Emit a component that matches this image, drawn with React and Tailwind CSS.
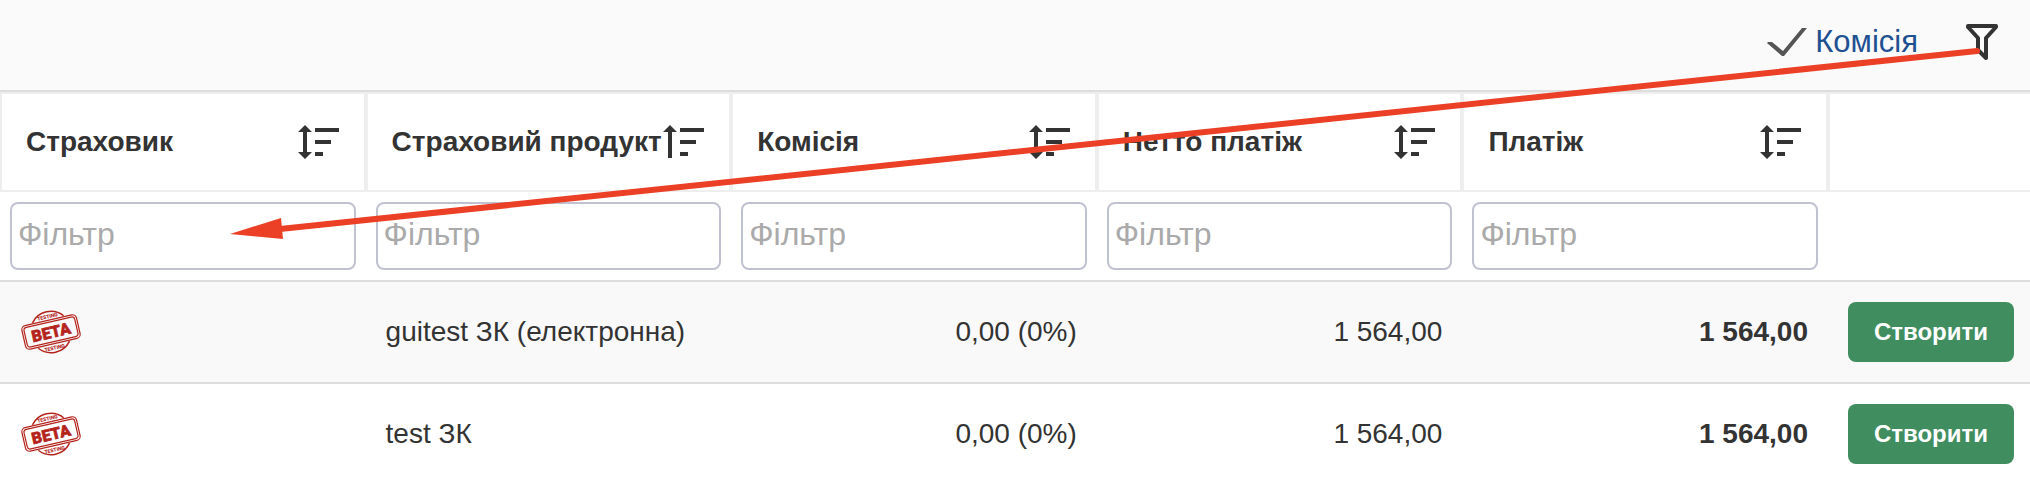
import React, { useState } from 'react';

const COLUMNS = [
  { key: "insurer", label: "Страховик", sort: "none" },
  { key: "product", label: "Страховий продукт", sort: "asc" },
  { key: "commission", label: "Комісія", sort: "none" },
  { key: "net", label: "Нетто платіж", sort: "none" },
  { key: "payment", label: "Платіж", sort: "none" },
];

const OFFERS = [
  { id: 1, product: "guitest ЗК (електронна)", commission: "0,00 (0%)", net: "1 564,00", payment: "1 564,00" },
  { id: 2, product: "test ЗК", commission: "0,00 (0%)", net: "1 564,00", payment: "1 564,00" },
];

function SortIcon({ direction }) {
  return (
    <svg className="w-[42px] h-[34px] shrink-0" viewBox="0 0 42 34" fill="#333" aria-hidden="true">
      <path d={direction === "asc" ? "M7 0L14 7H9V33H5V7H0Z" : "M7 0L14 7H9V27H14L7 34L0 27H5V7H0Z"} />
      <path d="M17 3H41V7H17ZM17 15H33V19H17ZM17 27H25V31H17Z" />
    </svg>
  );
}

function CheckIcon() {
  return (
    <svg className="w-10 h-7" viewBox="0 0 40 28" fill="#555" aria-hidden="true">
      <path d="M0 15L1 14H5L16 23L35 0H40L17 28H15Z" />
    </svg>
  );
}

function FunnelIcon() {
  return (
    <svg className="w-8 h-9" viewBox="0 0 32 36" fill="none" stroke="#333" strokeWidth="4" strokeLinejoin="round" aria-hidden="true">
      <path d="M2 2H30V3L20 14V34L12 26V14L2 3Z" />
    </svg>
  );
}

function BetaStamp() {
  return (
    <svg className="w-[62px] h-11" viewBox="0 0 62 44" fill="none" stroke="#b5241c" role="img" aria-label="Beta">
      <g transform="translate(31 22) rotate(-13)">
        <path d="M-16 -13A20.5 20.5 0 0 1 16 -13M-16 13A20.5 20.5 0 0 0 16 13" strokeWidth="1.5" />
        <rect x="-28" y="-12" width="56" height="24" rx="4" strokeWidth="1.2" />
        <rect x="-26" y="-10" width="52" height="20" rx="3" strokeWidth="1.2" />
        <g fill="#b5241c" stroke="none" textAnchor="middle" fontFamily="Roboto, sans-serif" fontWeight="900">
          <text y="6" fontSize="16" stroke="#b5241c" strokeWidth="0.6">BETA</text>
          <text y="-14" fontSize="5">TESTING</text>
          <text y="18" fontSize="5">TESTING</text>
        </g>
      </g>
    </svg>
  );
}

// Pointer from the funnel button to the filter row
function HintArrow() {
  return (
    <svg className="absolute left-0 top-0 w-full h-[480px] pointer-events-none" viewBox="0 0 2030 480" preserveAspectRatio="none" aria-hidden="true">
      <path d="M1977 51L280 229" stroke="#eb4025" strokeWidth="6" strokeLinecap="round" />
      <path d="M230 234L281 218L283 239Z" fill="#eb4025" />
    </svg>
  );
}

export default function App() {
  const [filters, setFilters] = useState({});

  return (
    <main className="relative max-h-screen overflow-hidden bg-white text-[#333] text-[28px] leading-8 font-['Liberation_Sans',Arial,sans-serif]">
      {/* Toolbar */}
      <div className="flex items-center justify-end h-[92px] pr-8 pb-1.5 bg-[#fafafa] border-b-2 border-[#ddd]">
        <button type="button" className="flex items-center gap-2 text-[31px] text-[#1f5091]">
          <CheckIcon />
          Комісія
        </button>
        <button type="button" className="ml-12" aria-label="Фільтр">
          <FunnelIcon />
        </button>
      </div>

      <table className="w-full table-fixed border-separate border-spacing-0">
        <colgroup>
          {COLUMNS.map((c) => <col key={c.key} />)}
          <col className="w-[202px]" />
        </colgroup>
        <thead>
          <tr>
            {COLUMNS.map((c) => (
              <th key={c.key} className="h-[100px] border-2 border-[#eee] p-0 text-left">
                <div className="flex items-center justify-between pl-6 pr-6 whitespace-nowrap">
                  {c.label}
                  <button type="button" aria-label={`Сортувати: ${c.label}`}>
                    <SortIcon direction={c.sort} />
                  </button>
                </div>
              </th>
            ))}
            <th className="border-2 border-r-0 border-[#eee]" aria-label="Дії"></th>
          </tr>
          <tr>
            {COLUMNS.map((c) => (
              <td key={c.key} className="p-[10px]">
                <input
                  className="block w-full h-[68px] border-2 border-[#c0c2d2] rounded-lg pl-1.5 pb-1 text-[32px] placeholder:text-[#aaa] outline-none"
                  placeholder="Фільтр"
                  aria-label={c.label}
                  value={filters[c.key] || ""}
                  onChange={(e) => setFilters((f) => ({ ...f, [c.key]: e.target.value }))}
                />
              </td>
            ))}
            <td></td>
          </tr>
        </thead>
        <tbody>
          {OFFERS.map((o) => (
            <tr key={o.id} className="odd:bg-[#f9f9f9]">
              <td className="border-t-2 border-[#ddd] px-5"><BetaStamp /></td>
              <td className="border-t-2 border-[#ddd] px-5">{o.product}</td>
              <td className="border-t-2 border-[#ddd] px-5 text-right">{o.commission}</td>
              <td className="border-t-2 border-[#ddd] px-5 text-right">{o.net}</td>
              <td className="border-t-2 border-[#ddd] px-5 text-right font-bold">{o.payment}</td>
              <td className="border-t-2 border-[#ddd] py-5 pl-5 pr-4">
                <button type="button" className="block w-full h-[60px] rounded-lg bg-[#408e60] text-white text-2xl font-bold">
                  Створити
                </button>
              </td>
            </tr>
          ))}
        </tbody>
      </table>

      <HintArrow />
    </main>
  );
}
